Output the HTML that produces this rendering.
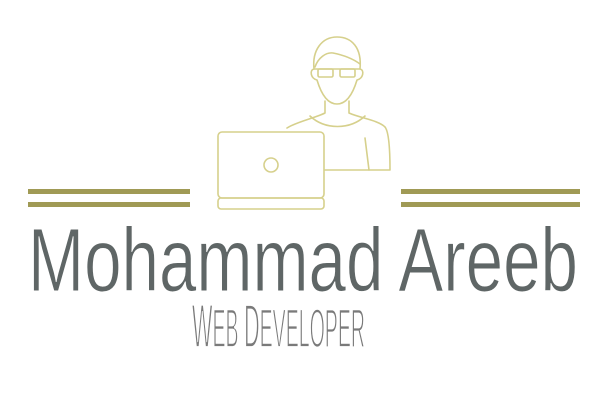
<!DOCTYPE html>
<html><head><style>
html,body{margin:0;padding:0;background:#fff;width:616px;height:405px;overflow:hidden}
svg{display:block}
</style></head><body>
<svg width="616" height="405" viewBox="0 0 616 405" xmlns="http://www.w3.org/2000/svg">
<rect x="28" y="189" width="162" height="5" fill="#a09a55"/>
<rect x="28" y="202" width="162" height="5" fill="#a09a55"/>
<rect x="401" y="189" width="179" height="5" fill="#a09a55"/>
<rect x="401" y="202" width="179" height="5" fill="#a09a55"/>
<g fill="none" stroke="#d6d08c" stroke-width="1.6" stroke-linejoin="round" stroke-linecap="round">
<path d="M317 80 C311 79 309 70 314 69 C312 50 322 37 337 37 C352 37 362 48 360 69 C365 70 363 79 357 80 C354 90 348 104 337 104 C326 104 320 90 317 80 Z"/>
<path d="M315 67 C318 58 326 52 333 53 C343 55 352 58 360 64"/>
<path d="M314 69 H360"/>
<rect x="318" y="69" width="15" height="8" rx="1.5"/>
<rect x="340" y="69" width="15" height="8" rx="1.5"/>
<path d="M325 101 V113 C315 118 296 122 287 128"/>
<path d="M349 101 V113 C360 118 378 120 385 127 C389 132 390 150 390 170 H325"/>
<path d="M310 116 C325 130 350 130 365 116"/>
<path d="M365 138 L369 170"/>
<rect x="218" y="132" width="106" height="66" rx="4"/>
<rect x="218" y="198" width="106" height="11" rx="3"/>
<circle cx="271" cy="165" r="7"/>
</g>
<text x="28" y="291" textLength="550" lengthAdjust="spacingAndGlyphs" font-family="Liberation Sans, sans-serif" font-size="90" fill="#5f6666" stroke="#fff" stroke-width="1">Mohammad Areeb</text>
<text x="192" y="347" textLength="173" lengthAdjust="spacingAndGlyphs" font-family="Liberation Sans, sans-serif" font-size="55" fill="#7a7a7a" stroke="#fff" stroke-width="1.8"><tspan font-size="61">W</tspan>EB <tspan font-size="61">D</tspan>EVELOPER</text>
</svg>
</body></html>
